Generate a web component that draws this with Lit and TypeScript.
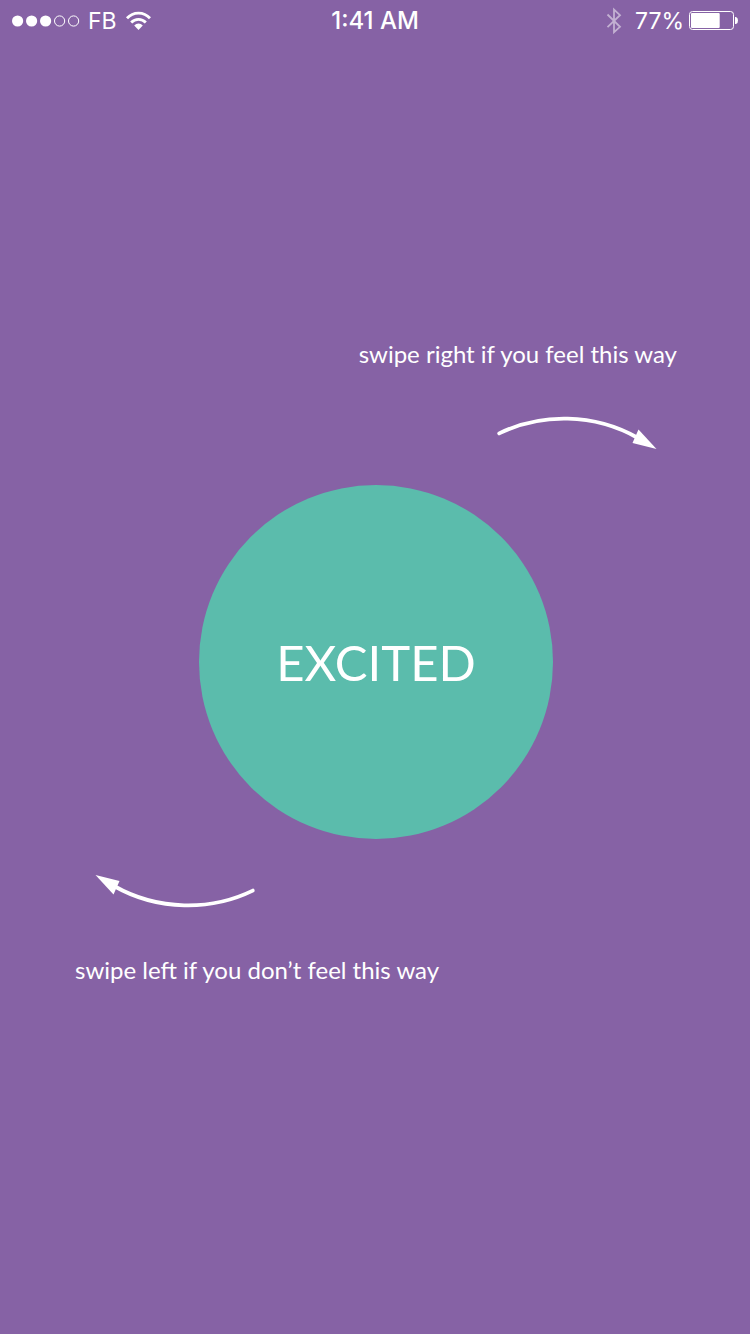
import { LitElement, html, css, svg } from "lit";
import { customElement, property } from "lit/decorators.js";

@customElement("status-bar")
class StatusBar extends LitElement {
  @property({ type: Number }) signal = 3;
  @property() carrier = "FB";
  @property() time = "1:41 AM";
  @property({ type: Number }) battery = 77;

  static styles = css`
    :host {
      display: grid;
      grid-template-columns: 1fr auto 1fr;
      align-items: center;
      height: 42px;
      padding: 0 12px;
      font: 400 23px/28px Inter, sans-serif;
      color: #fff;
    }
    .side {
      display: flex;
      align-items: center;
      gap: 8px;
    }
    .end {
      justify-content: flex-end;
      gap: 5px;
    }
    .time {
      font-size: 24px;
      font-weight: 500;
    }
    svg {
      display: block;
      flex: none;
    }
    .bluetooth {
      margin-right: 8px;
    }
  `;

  render() {
    return html`
      <div class="side">
        <svg width="68" height="12" viewBox="0 0 68 12" role="img" aria-label="Signal strength">
          ${[0, 1, 2, 3, 4].map((i) =>
            i < this.signal
              ? svg`<circle cx=${5.6 + i * 14} cy="6" r="5.6" fill="#fff" />`
              : svg`<circle cx=${5.6 + i * 14} cy="6" r="5.1" fill="none" stroke="#fff" />`
          )}
        </svg>
        <span>${this.carrier}</span>
        <svg width="26" height="20" viewBox="0 0 26 20" role="img" aria-label="Wi-Fi">
          <g fill="none" stroke="#fff" stroke-width="2.8">
            <path d="M2 7.2A15.4 15.4 0 0 1 25 7.2" />
            <path d="M6.2 11.5A10 10 0 0 1 20.8 11.5" />
          </g>
          <path d="M9.2 14.4A6 6 0 0 1 17.8 14.4L13.5 19Z" fill="#fff" />
        </svg>
      </div>
      <span class="time">${this.time}</span>
      <div class="side end">
        <svg class="bluetooth" width="16" height="28" viewBox="0 0 16 28" role="img" aria-label="Bluetooth">
          <path
            d="M1.5 7.5L14 19.8L8 25.2V2.6L14 8.2L1.5 20.2"
            fill="none" stroke="#fff" stroke-opacity="0.5" stroke-width="1.8"
          />
        </svg>
        <span>${this.battery}%</span>
        <svg width="49" height="20" viewBox="0 0 49 20" role="img" aria-label="Battery">
          <rect x="0.5" y="0.5" width="44" height="18" rx="3" fill="none" stroke="#fff" />
          <rect x="2" y="2" width=${(this.battery * 41) / 110} height="15" rx="1" fill="#fff" />
          <path d="M46 6H47Q49 6.5 49 9.5T47 13H46Z" fill="#fff" />
        </svg>
      </div>
    `;
  }
}

@customElement("swipe-arrow")
class SwipeArrow extends LitElement {
  @property() direction: "left" | "right" = "right";

  static styles = css`
    :host,
    svg {
      display: block;
    }
  `;

  render() {
    const turn = this.direction === "left" ? "rotate(180 80.5 18)" : "";
    return html`
      <svg width="161" height="36" viewBox="0 0 161 36" aria-hidden="true">
        <g transform=${turn}>
          <path
            d="M3.2 19.4C45 -1 98 -1 142 24"
            fill="none" stroke="#fff" stroke-width="3.8" stroke-linecap="round"
          />
          <path d="M160.5 35L142.5 15.5L136.5 29Z" fill="#fff" />
        </g>
      </svg>
    `;
  }
}

@customElement("app-root")
class AppRoot extends LitElement {
  @property() mood = "EXCITED";

  static styles = css`
    :host {
      display: flex;
      flex-direction: column;
      min-height: 100vh;
      background: #8662a5;
      color: #fff;
      font-family: Lato, sans-serif;
    }
    main {
      flex: 1;
      display: flex;
      flex-direction: column;
      justify-content: center;
      padding: 0 73px 52px 75px;
    }
    .hint {
      display: flex;
      flex-direction: column;
      gap: 45px;
      font-size: 24px;
      line-height: 30px;
    }
    .hint p {
      margin: 0;
    }
    .right {
      align-items: flex-end;
    }
    .left {
      align-items: flex-start;
    }
    .right swipe-arrow {
      margin-right: 20px;
    }
    .left swipe-arrow {
      margin-left: 20px;
    }
    .mood {
      align-self: center;
      width: 354px;
      max-width: 100%;
      aspect-ratio: 1;
      margin: 35px 0;
      padding: 0;
      border: 0;
      border-radius: 50%;
      background: #5bbcac;
      color: inherit;
      font: 400 49px/60px Lato, sans-serif;
    }
  `;

  render() {
    return html`
      <status-bar></status-bar>
      <main>
        <div class="hint right">
          <p>swipe right if you feel this way</p>
          <swipe-arrow direction="right"></swipe-arrow>
        </div>
        <button class="mood" type="button">${this.mood}</button>
        <div class="hint left">
          <swipe-arrow direction="left"></swipe-arrow>
          <p>swipe left if you don’t feel this way</p>
        </div>
      </main>
    `;
  }
}
